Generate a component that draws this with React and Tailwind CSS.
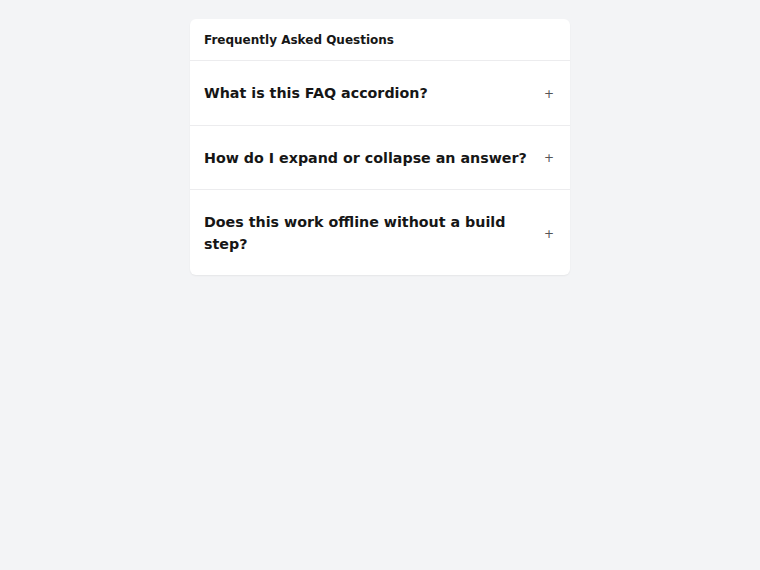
import React, { useState } from "react";

const faqs = [
  {
    q: "What is this FAQ accordion?",
    a: "A small list of questions where each answer can be shown or hidden.",
  },
  {
    q: "How do I expand or collapse an answer?",
    a: "Click a question, or press Enter or Space while it has focus.",
  },
  {
    q: "Does this work offline without a build step?",
    a: "Yes. Everything it needs is in this one page.",
  },
];

function FaqItem({ item, open, onToggle, last }) {
  return (
    <div className={last ? "" : "border-b border-[#ececee]"}>
      <button
        type="button"
        onClick={onToggle}
        className="flex w-full items-center gap-2 px-[14px] pt-[22px] pb-[20px] text-left"
      >
        <span className="flex-1 text-[14.25px] font-bold leading-[21.6px] text-[#161616]">
          {item.q}
        </span>
        <span className="w-[14px] text-center text-[12px] leading-none text-[#555]">
          {open ? "−" : "+"}
        </span>
      </button>
      {open && (
        <div className="px-[14px] pb-5 text-[13px] leading-[20px] text-[#444]">
          {item.a}
        </div>
      )}
    </div>
  );
}

export default function App() {
  const [openIndex, setOpenIndex] = useState(null);

  return (
    <div
      className="min-h-[570px] bg-[#f3f4f6] pt-[19px]"
      style={{ fontFamily: '"DejaVu Sans", sans-serif' }}
    >
      <div className="mx-auto w-[380px] overflow-hidden rounded-md bg-white shadow-[0_1px_2px_rgba(0,0,0,0.06)]">
        <div className="border-b border-[#ececee] px-[14px] pt-[13px] pb-[11px] text-[12px] font-bold leading-[17px] text-[#161616]">
          Frequently Asked Questions
        </div>
        {faqs.map((item, i) => (
          <FaqItem
            key={item.q}
            item={item}
            open={openIndex === i}
            last={i === faqs.length - 1}
            onToggle={() => setOpenIndex(openIndex === i ? null : i)}
          />
        ))}
      </div>
    </div>
  );
}
